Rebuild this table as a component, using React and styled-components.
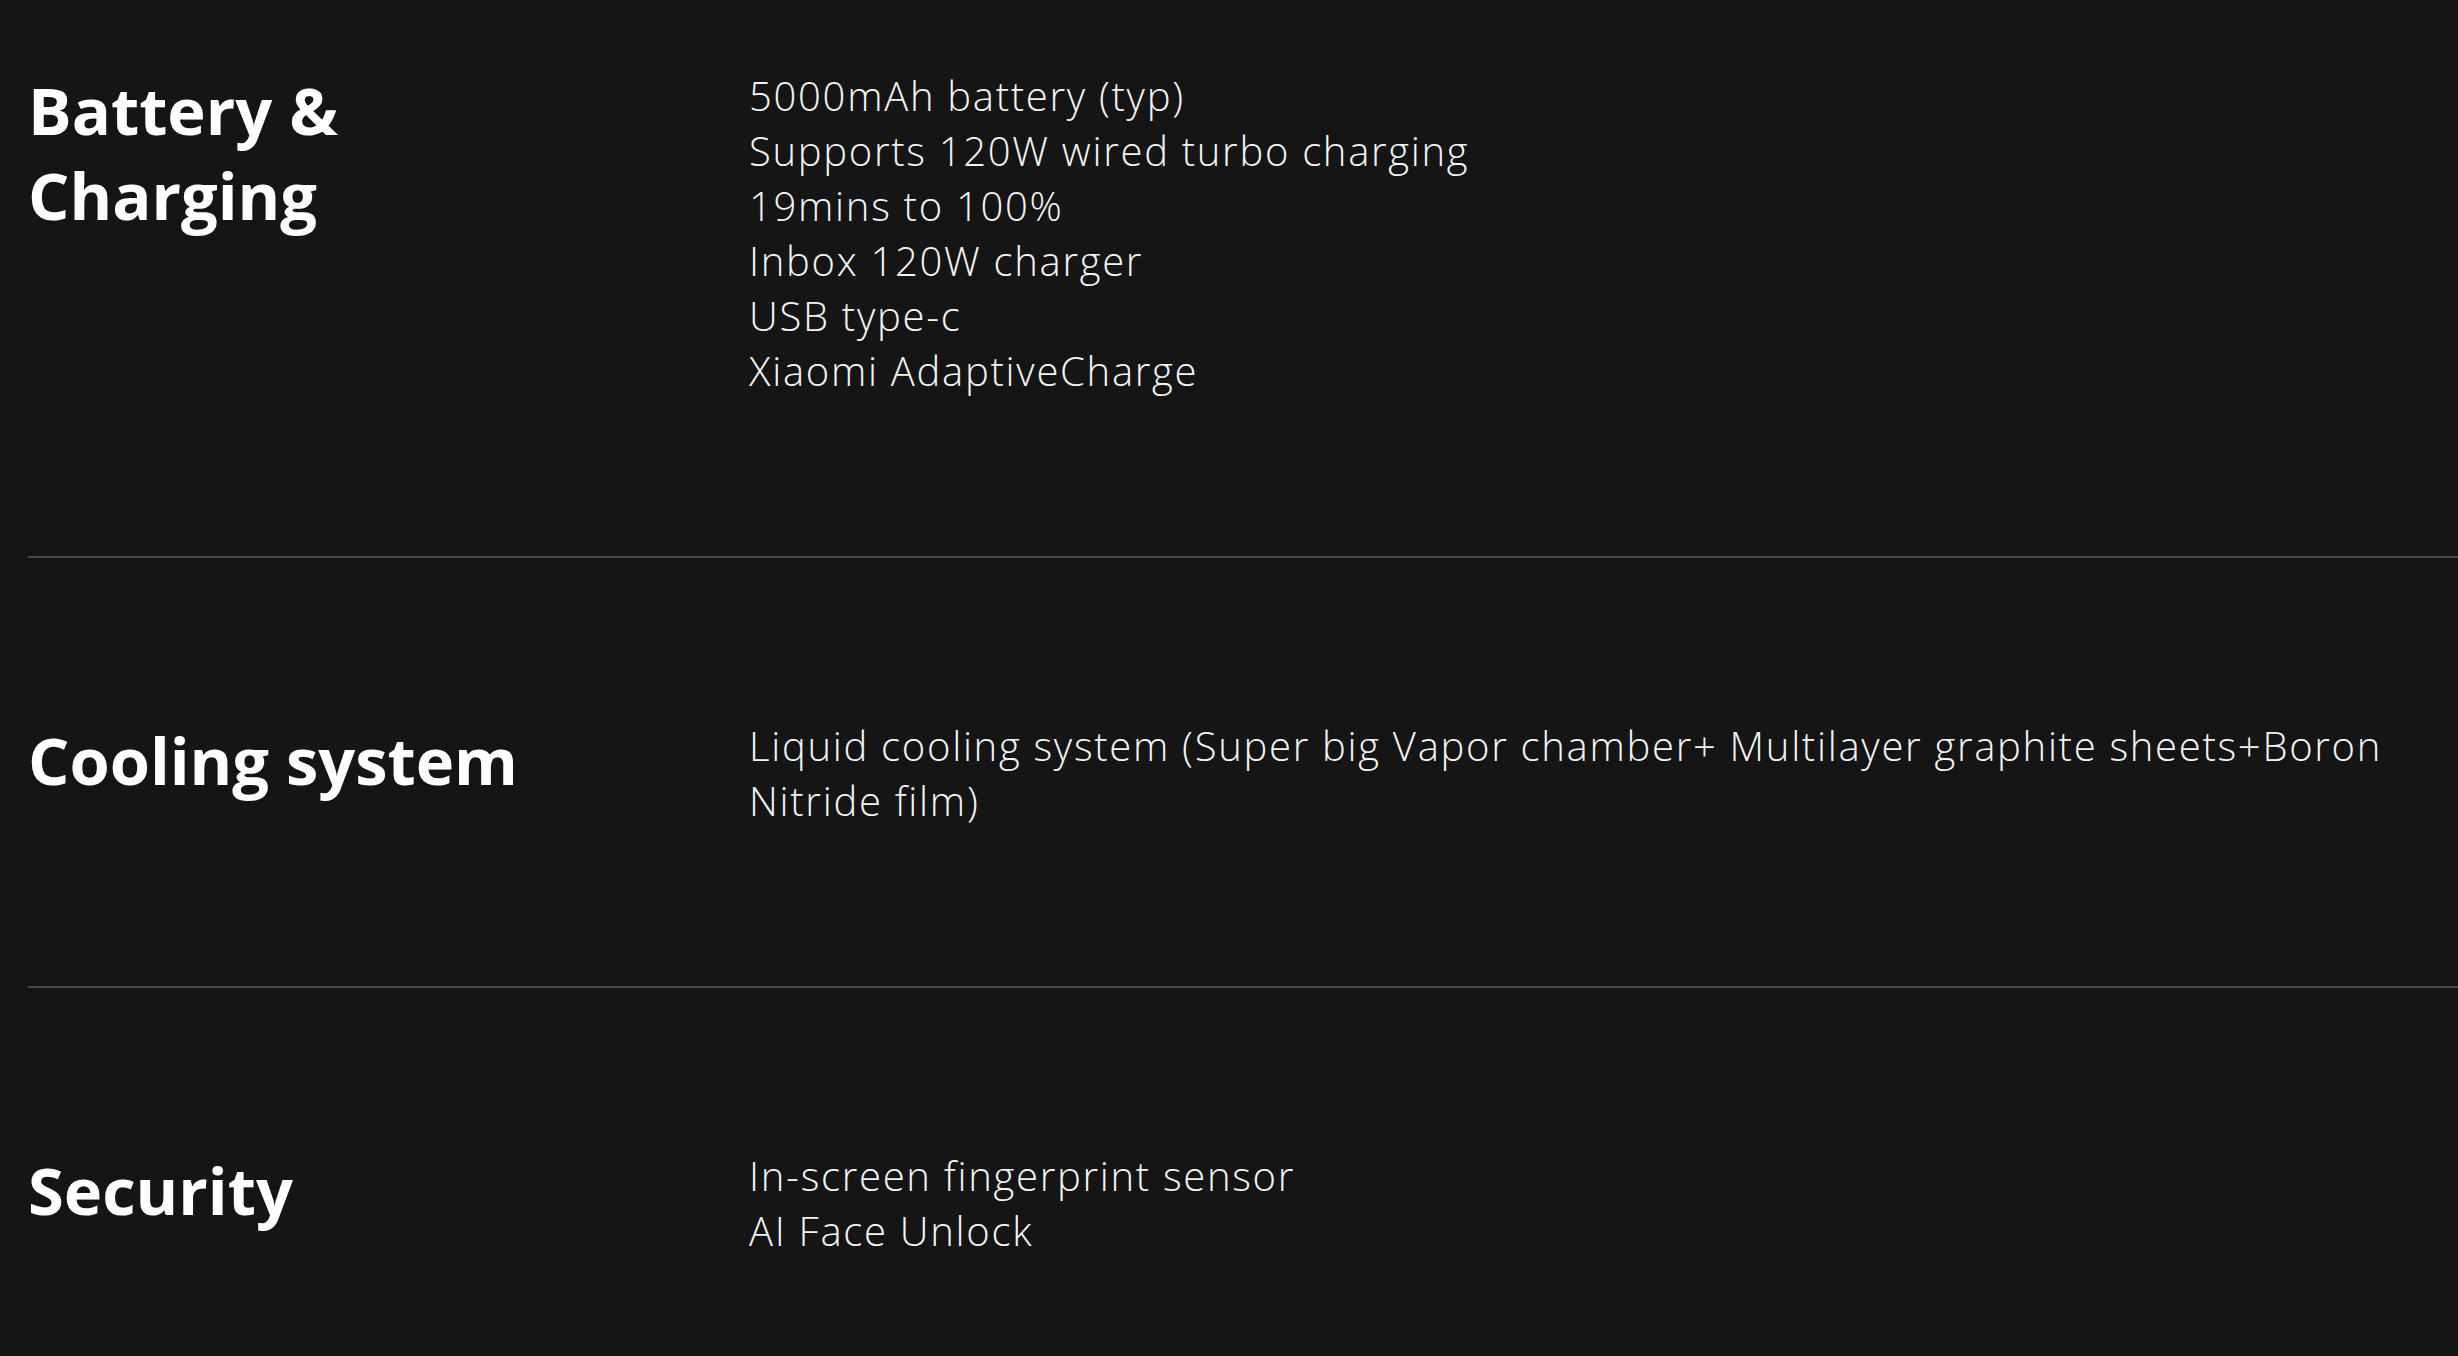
import styled, { createGlobalStyle } from "styled-components";

const specs = [
  {
    title: ["Battery &", "Charging"],
    items: [
      "5000mAh battery (typ)",
      "Supports 120W wired turbo charging",
      "19mins to 100%",
      "Inbox 120W charger",
      "USB type-c",
      "Xiaomi AdaptiveCharge",
    ],
  },
  {
    title: ["Cooling system"],
    items: [
      "Liquid cooling system (Super big Vapor chamber+ Multilayer graphite sheets+Boron Nitride film)",
    ],
  },
  {
    title: ["Security"],
    items: ["In-screen fingerprint sensor", "AI Face Unlock"],
  },
];

const GlobalStyle = createGlobalStyle`
  html, body {
    margin: 0;
    padding: 0;
    background: #151515;
  }
  body {
    font-family: "Open Sans", "Noto Sans", sans-serif;
    color: #fff;
    overflow: hidden;
  }
`;

const Page = styled.div`
  width: 100vw;
  height: 100vh;
  background: #151515;
  padding-left: 28px;
  box-sizing: border-box;
  overflow: hidden;
`;

const Section = styled.section`
  display: grid;
  grid-template-columns: 721px 1fr;
  align-items: start;
  padding: ${(p) => (p.$first ? "68px" : "160px")} 0 158px;
  border-top: ${(p) => (p.$first ? "none" : "2px solid #474747")};
`;

const Title = styled.h2`
  margin: 0;
  font-size: 65px;
  font-weight: 700;
  line-height: 85px;
  color: #fff;
`;

const Values = styled.ul`
  list-style: none;
  margin: 0;
  padding: 0 40px 0 0;
`;

const Value = styled.li`
  font-size: 40px;
  font-weight: 300;
  line-height: 55px;
  letter-spacing: 1.7px;
  color: #f4f4f4;
`;

export default function App() {
  return (
    <Page>
      <GlobalStyle />
      {specs.map((spec, i) => (
        <Section key={i} $first={i === 0}>
          <Title>
            {spec.title.map((t, j) => (
              <div key={j}>{t}</div>
            ))}
          </Title>
          <Values>
            {spec.items.map((item, j) => (
              <Value key={j}>{item}</Value>
            ))}
          </Values>
        </Section>
      ))}
    </Page>
  );
}
